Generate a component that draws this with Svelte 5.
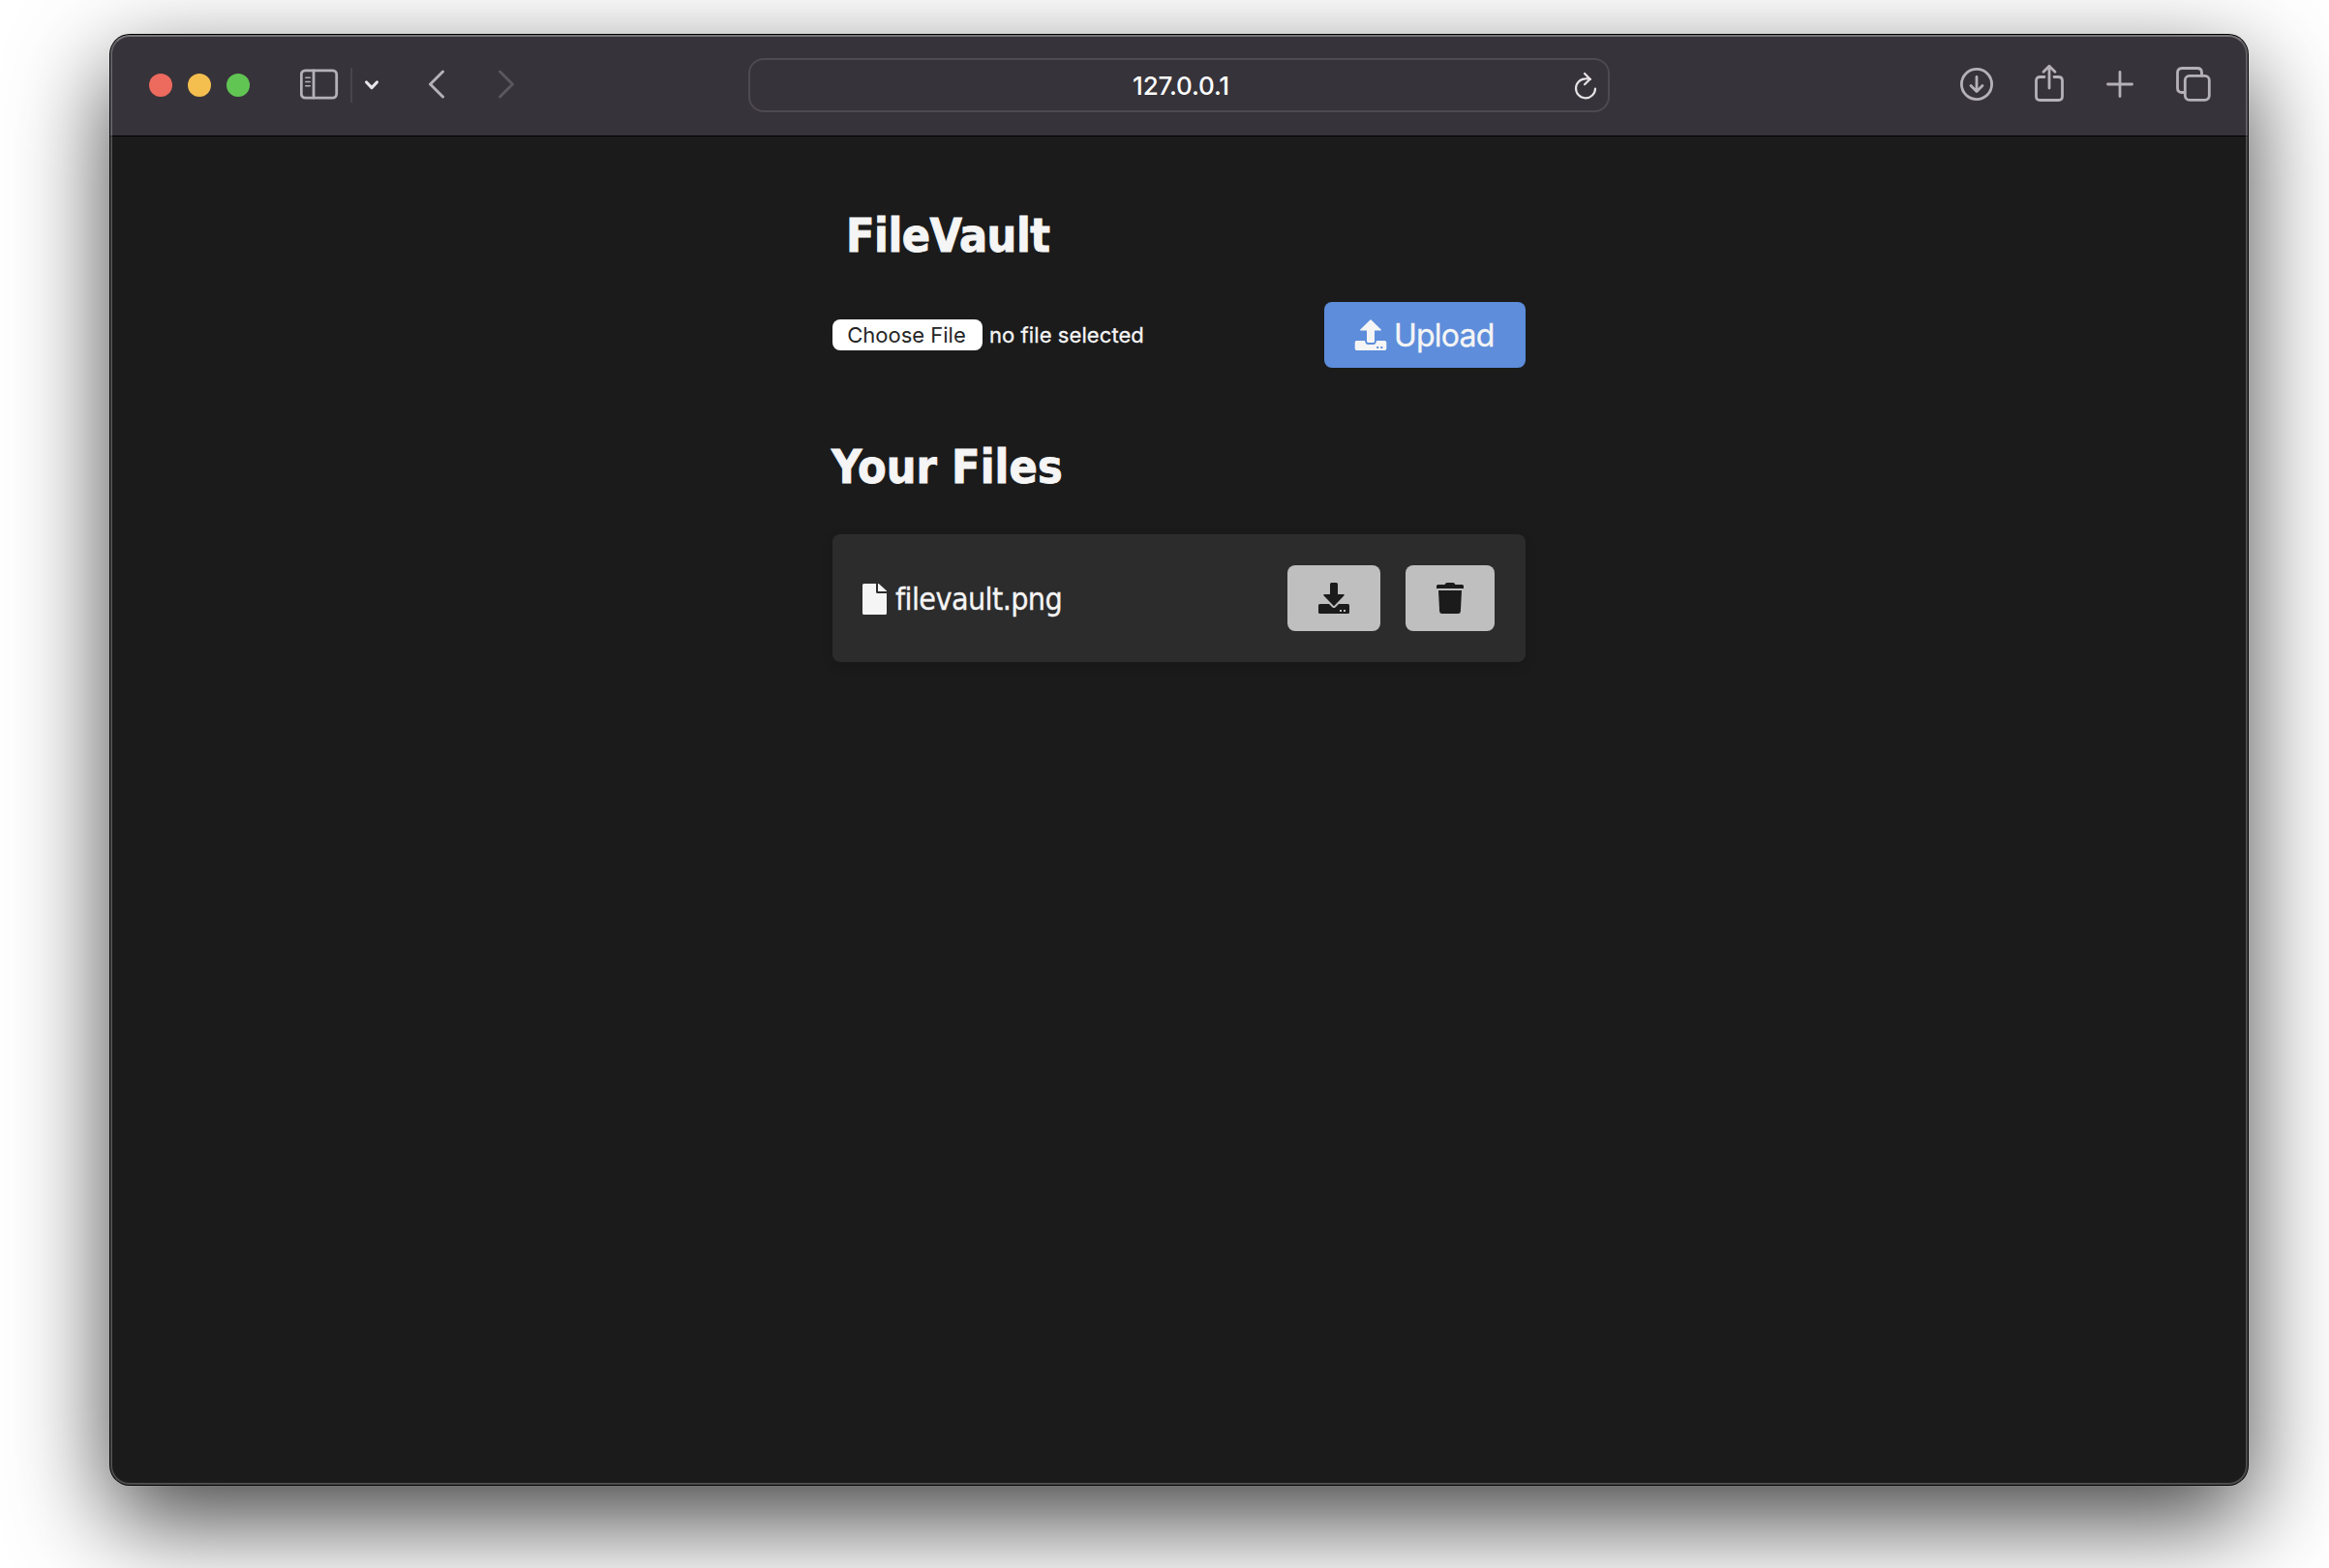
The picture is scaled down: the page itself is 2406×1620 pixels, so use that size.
<script>
  const files = [{ name: 'filevault.png' }];
</script>

<main class="desktop">
  <section class="window">
    <header class="toolbar">
      <div class="lights">
        <span class="light red"></span>
        <span class="light yellow"></span>
        <span class="light green"></span>
      </div>
      <svg class="sidebar" width="40" height="32" viewBox="0 0 40 32">
        <rect x="1.3" y="1.9" width="36.4" height="28.2" rx="4" />
        <path d="M14 2v28" />
        <path class="thin" d="M5.8 9.3h4.4M5.8 13.5h4.4M5.8 17.7h4.4" />
      </svg>
      <span class="divider"></span>
      <svg class="chevron" width="16" height="12" viewBox="0 0 16 12"><path d="M2.600 3 8 8.600l5.400-5.600" /></svg>
      <svg class="back" width="18" height="30" viewBox="0 0 18 30"><path d="M15.500 2 2.500 15l13 13" /></svg>
      <svg class="forward" width="18" height="30" viewBox="0 0 18 30"><path d="M2.500 2l13 13-13 13" /></svg>
      <div class="address">
        <span>127.0.0.1</span>
        <svg class="reload" width="26" height="30" viewBox="0 0 26 30">
          <path d="M23 17.500A10 10 0 1 1 13 7.300q2.500-.2 5 .6M12 2l5.700 5.700-5.700 5.500" />
        </svg>
      </div>
      <svg class="downloads" width="36" height="36" viewBox="0 0 36 36">
        <circle cx="18" cy="18" r="15.600" />
        <path d="M18 10.500v14.500M12 19.500l6 6 6-6" />
      </svg>
      <svg class="share" width="32" height="40" viewBox="0 0 32 40">
        <path d="M11 13.500H6.500q-4 0-4 4v16q0 4 4 4h19q4 0 4-4v-16q0-4-4-4H21M16 25V3M10 8.300l6-6 6 6" />
      </svg>
      <svg class="plus" width="28" height="28" viewBox="0 0 28 28"><path d="M14 1.500v25M1.500 14h25" /></svg>
      <svg class="tabs" width="36" height="36" viewBox="0 0 36 36">
        <path d="M9 26.500H6q-4.500 0-4.500-4.500V6q0-4.500 4.500-4.500h16q4.500 0 4.500 4.500v3" />
        <rect x="9.300" y="9.300" width="25" height="25" rx="4.500" />
      </svg>
    </header>

    <div class="page">
      <h1>FileVault</h1>
      <form class="upload-row">
        <button type="button" class="choose">Choose File</button>
        <span class="status">no file selected</span>
        <button type="button" class="upload">
          <svg width="34" height="34" viewBox="0 0 34 34">
            <path d="M17 1 28 11.800q.4.800-.7.800H21v11q0 1.400-1.400 1.400h-5.200Q13 25 13 23.600v-11H6.700q-1.100 0-.7-.800z" />
            <path fill-rule="evenodd" d="M2.500 23H11q.4 4 3.400 4h5.200q3 0 3.400-4h8.500q1.800 0 1.800 1.800v6.400q0 1.800-1.800 1.800h-29Q.7 33 .7 31.200v-6.400Q.7 23 2.500 23zM23.200 29v2h2v-2zM27.300 29v2h2v-2z" />
          </svg>
          <span>Upload</span>
        </button>
      </form>

      <h2>Your Files</h2>
      {#each files as file}
        <article class="file">
          <svg class="doc" width="25" height="32" viewBox="0 0 25 32">
            <path d="M1.500 0H14v8.500Q14 10 15.500 10H25v20.500q0 1.500-1.500 1.500h-22Q0 32 0 30.500v-29Q0 0 1.500 0z" />
            <path d="M16 0h.8L25 7.400V8h-9z" />
          </svg>
          <span class="name">{file.name}</span>
          <button class="action" type="button" aria-label="Download">
            <svg width="32" height="32" viewBox="0 0 32 32">
              <path d="M13.500 0h5Q20 0 20 1.500V12h6q1.300.2.600 1.300L16 24.300 5.400 13.300Q4.700 12.200 6 12h6V1.500Q12 0 13.500 0z" />
              <path fill-rule="evenodd" d="M1.500 22H11l3.500 3.500q1.500 1.200 3 0L21 22h9.500q1.500 0 1.500 1.500v7q0 1.500-1.500 1.500h-29Q0 32 0 30.500v-7Q0 22 1.500 22zM22 28v2h2v-2zM26 28v2h2v-2z" />
            </svg>
          </button>
          <button class="action" type="button" aria-label="Delete">
            <svg width="28" height="32" viewBox="0 0 28 32">
              <path d="M1.500 2H8.500q.8-2 2.500-2h6q1.700 0 2.500 2h7Q28 2 28 3.500V6H0V3.500Q0 2 1.500 2z" />
              <path d="M2 8h24l-1.100 21.500Q24.700 32 22.400 32H5.600Q3.300 32 3.100 29.500z" />
            </svg>
          </button>
        </article>
      {/each}
    </div>
  </section>
</main>

<style>
  :global(body) { background: #fff; }
  * { box-sizing: border-box; }
  .desktop { height: 1620px; padding: 36px 84px 86px 114px; overflow: hidden; }
  .window {
    position: relative;
    width: 2208px;
    height: 1498px;
    border-radius: 20px;
    background: #1b1b1b;
    box-shadow: 0 0 0 1px #000, 0 36px 100px rgba(0, 0, 0, 0.75);
  }
  /* Light rim drawn over the window's edge */
  .window::after {
    content: '';
    position: absolute;
    inset: 0;
    border: 2px solid rgba(255, 255, 255, 0.22);
    border-top-color: rgba(255, 255, 255, 0.32);
    border-radius: 20px;
    pointer-events: none;
  }
  .toolbar {
    display: flex;
    align-items: center;
    height: 105px;
    padding: 0 38px 2px 40px;
    border-radius: 20px 20px 0 0;
    border-bottom: 1px solid #000;
    background: #37333a;
  }
  .toolbar svg {
    flex: none;
    fill: none;
    stroke: #b5b1b8;
    stroke-width: 2.8;
    stroke-linecap: round;
    stroke-linejoin: round;
  }
  .lights { display: flex; gap: 16px; padding-top: 2px; }
  .light { width: 24px; height: 24px; border-radius: 50%; }
  .red { background: #ed6a5e; }
  .yellow { background: #f5bf4f; }
  .green { background: #61c554; }
  .sidebar { margin-left: 52px; }
  .toolbar .thin { stroke-width: 1.6; }
  .divider { width: 2px; height: 36px; margin: 2px 0 0 12px; background: #49454c; }
  .toolbar .chevron { margin: 1px 0 0 12px; stroke: #e8e6ea; stroke-width: 3.2; }
  .toolbar .back { margin-left: 50px; stroke-width: 3; }
  .toolbar .forward { margin-left: 54px; stroke: #5b575f; stroke-width: 3; }
  .address {
    display: flex;
    align-items: center;
    width: 891px;
    height: 56px;
    margin: 2px 0 0 241px;
    padding: 0 10px 0 36px;
    border: 2px solid #4e4a51;
    border-radius: 16px;
    font: 500 26px/1 Inter, sans-serif;
    color: #fff;
  }
  .address span { flex: 1; padding: 2px 0 0 4px; text-align: center; letter-spacing: -0.15px; }
  .toolbar .reload { margin-top: 1px; stroke: #e5e3e6; stroke-width: 2.2; }
  .downloads { margin-left: 361px; }
  .share { margin: -3px 0 0 41px; }
  .plus { margin-left: 43px; }
  .tabs { margin: 0 0 0 44px; }

  .page {
    width: 716px;
    margin: 0 auto;
    color: #f5f5f5;
    font-family: 'DejaVu Sans Condensed', 'DejaVu Sans', sans-serif;
    font-stretch: condensed;
  }
  h1, h2 {
    margin: 0;
    font-size: 48px;
    line-height: 58px;
    font-weight: 700;
    white-space: nowrap;
    -webkit-text-stroke: 0.9px currentColor;
  }
  h1 { padding: 73px 0 0 14px; letter-spacing: -0.45px; }
  h2 { padding-top: 73px; margin-left: -1px; letter-spacing: 0.1px; }
  .upload-row { display: flex; align-items: center; margin-top: 40px; font-family: Inter, sans-serif; }
  button { border: 0; margin: 0; padding: 0; font-family: Inter, sans-serif; }
  .choose {
    width: 155px;
    height: 32px;
    padding-right: 2px;
    border-radius: 8px;
    background: #fff;
    color: #262626;
    font-size: 22px;
    line-height: 32px;
  }
  .status { margin-left: 7px; font-size: 22px; line-height: 32px; letter-spacing: 0.08px; -webkit-text-stroke: 0.3px currentColor; }
  .upload {
    display: flex;
    align-items: center;
    width: 208px;
    height: 68px;
    margin-left: auto;
    padding-left: 31px;
    border-radius: 8px;
    background: #5d8ddb;
    color: #f5f5f5;
    font-size: 32px;
    letter-spacing: -0.8px;
  }
  .upload svg { margin-right: 7px; }
  .upload span { padding-top: 1px; -webkit-text-stroke: 0.3px currentColor; }
  button svg, .doc { fill: currentColor; flex: none; }
  .file {
    display: flex;
    align-items: center;
    height: 132px;
    margin-top: 41px;
    padding: 0 32px 0 31px;
    border-radius: 8px;
    background: #2c2c2c;
    box-shadow: 0 4px 12px rgba(0, 0, 0, 0.15);
  }
  .doc { margin-top: 1px; }
  .name { flex: 1; padding: 2px 0 0 9px; font-size: 32px; letter-spacing: -0.6px; -webkit-text-stroke: 0.3px currentColor; }
  .action {
    display: flex;
    align-items: center;
    height: 68px;
    padding: 0 32px;
    border-radius: 8px;
    background: #bfbfbf;
    color: #1b1b1b;
  }
  .action + .action { margin-left: 26px; }
</style>
